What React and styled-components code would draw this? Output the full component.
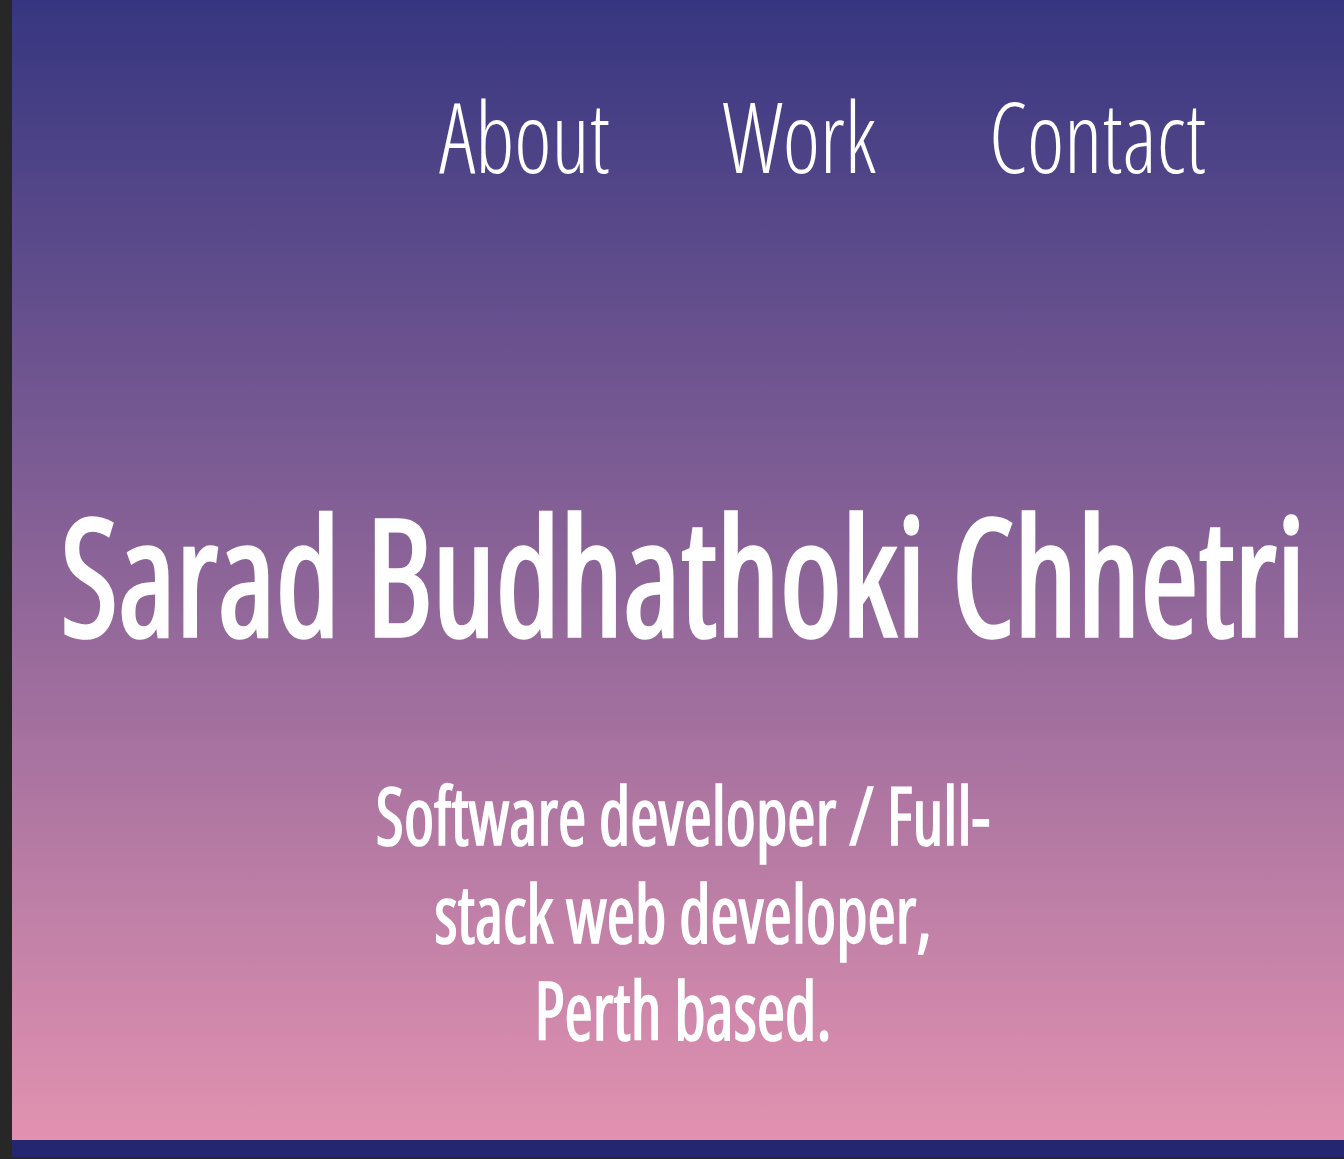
import React from "react";
import styled, { createGlobalStyle } from "styled-components";

const GlobalStyle = createGlobalStyle`
  html, body {
    margin: 0;
    padding: 0;
    background: #272727;
  }
  body {
    font-family: "Open Sans", sans-serif;
    font-stretch: 75%;
  }
`;

const Page = styled.div`
  min-height: 100vh;
  padding-left: 12px;
  box-sizing: border-box;
`;

const Hero = styled.section`
  height: 1140px;
  display: flex;
  flex-direction: column;
  padding-top: 94px;
  box-sizing: border-box;
  background: linear-gradient(180deg, #363680 0%, #e292b0 100%);
  color: #ffffff;
`;

const NavBar = styled.nav`
  display: flex;
  justify-content: flex-end;
  gap: 113px;
  padding-right: 138px;
`;

// tall condensed letters: stretch vertically around the baseline
const NavLink = styled.a`
  font-size: 89px;
  font-weight: 300;
  line-height: 1;
  color: #ffffff;
  text-decoration: none;
  cursor: pointer;
  transform: scaleY(1.1);
  transform-origin: 50% 79px;
`;

const Intro = styled.div`
  display: flex;
  flex-direction: column;
  align-items: center;
  margin-top: 329px;
  padding-left: 10px;
`;

const Name = styled.h1`
  margin: 0;
  font-size: 140.5px;
  font-weight: 500;
  line-height: 1;
  white-space: nowrap;
  -webkit-text-stroke: 3px #ffffff;
  transform: scaleY(1.16);
  transform-origin: 50% 124px;
`;

const Tagline = styled.p`
  margin: 124px 0 0;
  width: 625px;
  font-size: 68.5px;
  font-weight: 500;
  line-height: 83.7px;
  text-align: center;
  -webkit-text-stroke: 1.5px #ffffff;
  transform: scaleY(1.165);
  transform-origin: 50% 68px;
`;

const Band = styled.div`
  height: 17px;
  background: #24266f;
`;

const links = ["About", "Work", "Contact"];

const App = () => {
  return (
    <Page>
      <GlobalStyle />
      <Hero>
        <NavBar>
          {links.map((l) => (
            <NavLink key={l}>{l}</NavLink>
          ))}
        </NavBar>
        <Intro>
          <Name>Sarad Budhathoki Chhetri</Name>
          <Tagline>Software developer / Full-stack web developer, Perth based.</Tagline>
        </Intro>
      </Hero>
      <Band />
    </Page>
  );
};

export default App;
